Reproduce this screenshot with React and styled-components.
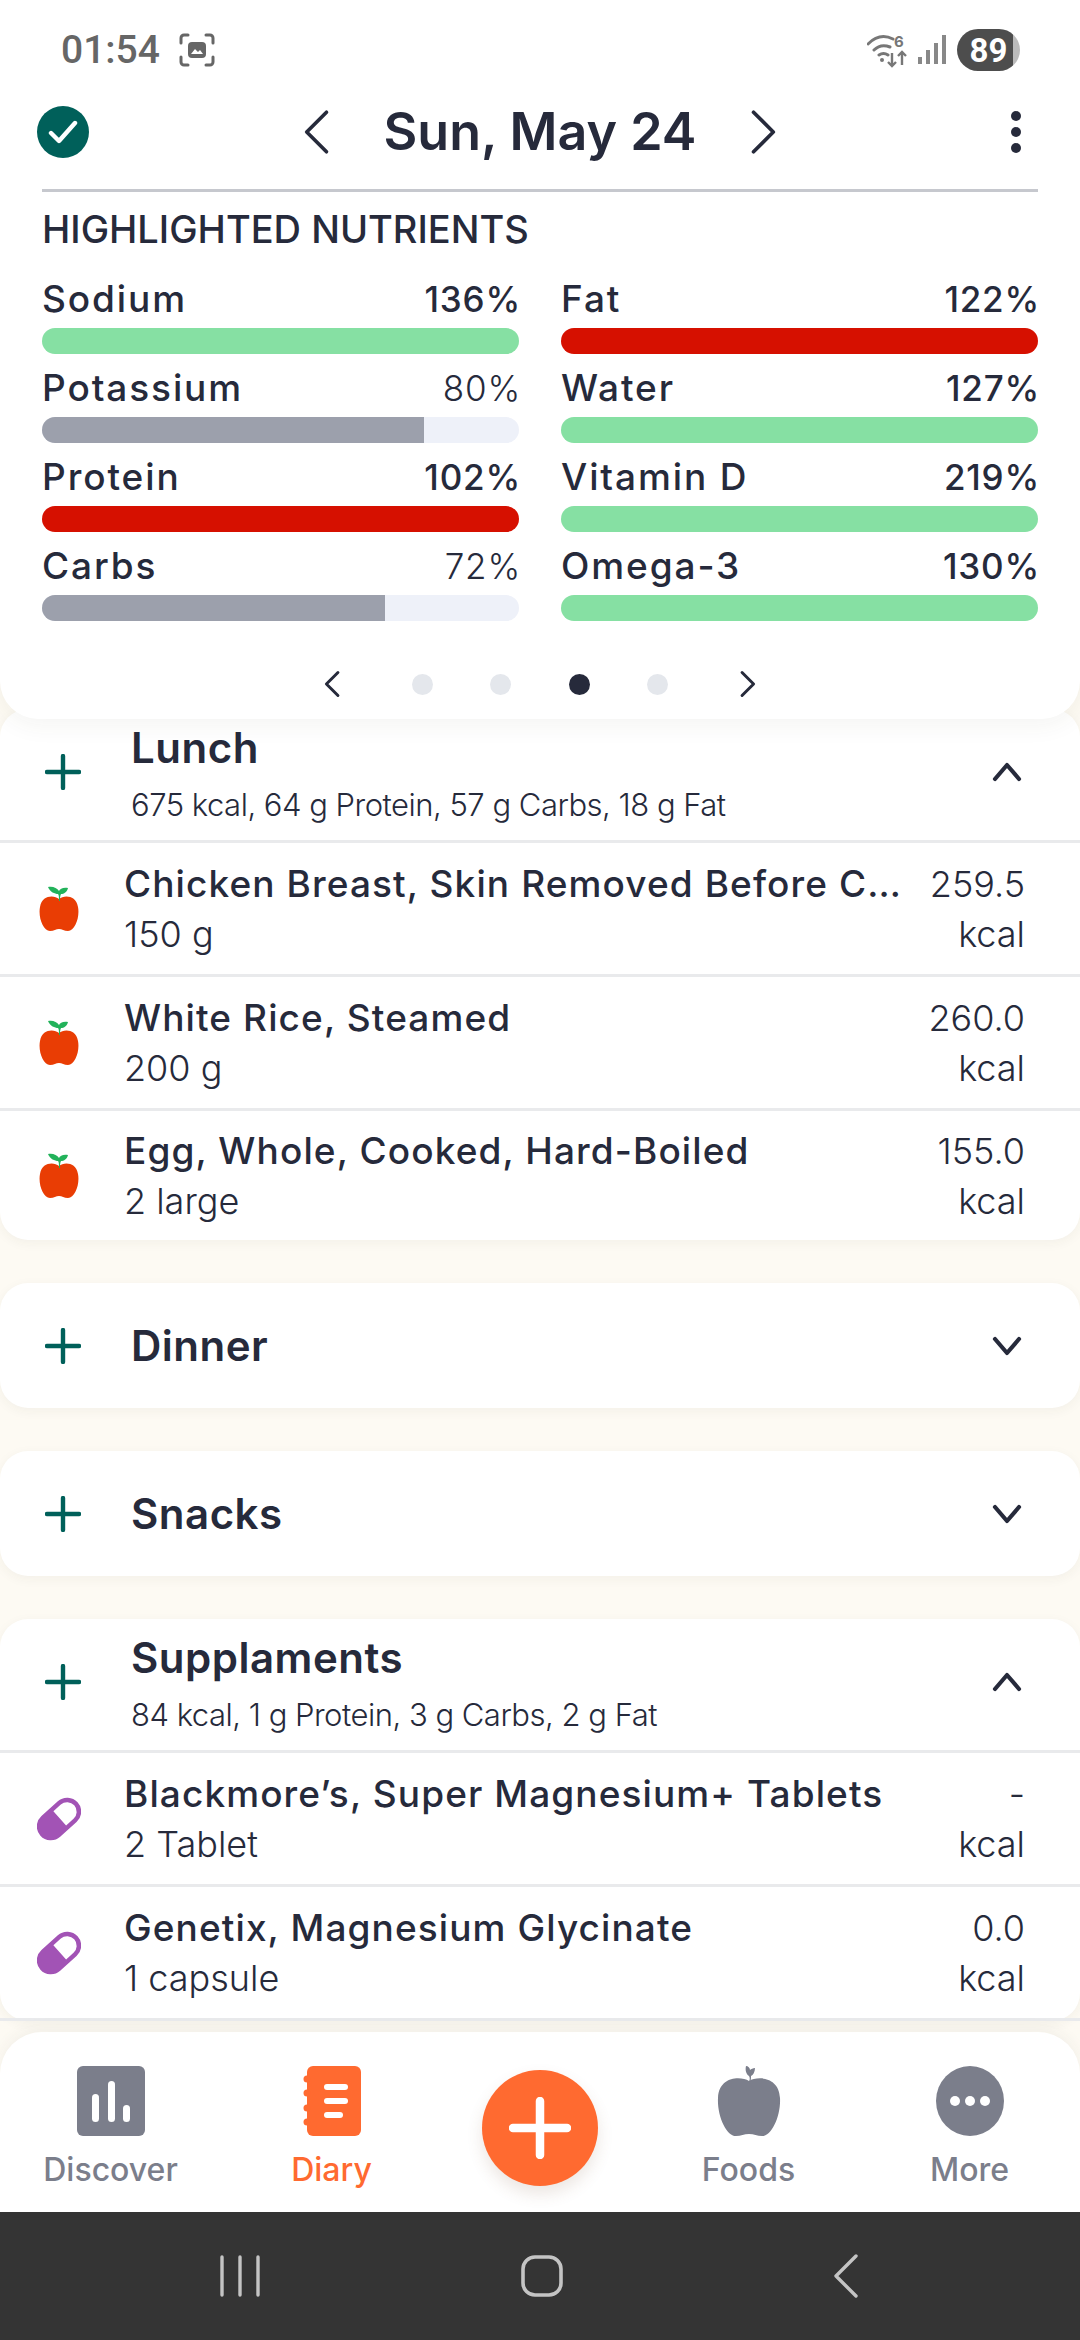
import React from 'react';
import styled, { createGlobalStyle } from 'styled-components';

const INK = '#262a3b';
const TEAL = '#00605a';
const ORANGE = '#ff6a30';
const GRAY = '#7b7e8b';
const CREAM = '#fdfaf3';

const GlobalStyle = createGlobalStyle`
  * { box-sizing: border-box; }
  html, body { margin: 0; padding: 0; background: ${CREAM}; }
  body { font-family: Inter, "Noto Sans", sans-serif; color: ${INK}; }
`;

const NUTRIENTS = [
  [
    { name: 'Sodium', pct: 136, color: '#86e0a3', bold: true },
    { name: 'Potassium', pct: 80, color: '#9ca0ac' },
    { name: 'Protein', pct: 102, color: '#d61000', bold: true },
    { name: 'Carbs', pct: 72, color: '#9ca0ac' },
  ],
  [
    { name: 'Fat', pct: 122, color: '#d61000', bold: true },
    { name: 'Water', pct: 127, color: '#86e0a3', bold: true },
    { name: 'Vitamin D', pct: 219, color: '#86e0a3', bold: true },
    { name: 'Omega-3', pct: 130, color: '#86e0a3', bold: true },
  ],
];

const LUNCH = [
  { name: 'Chicken Breast, Skin Removed Before C…', amount: '150 g', kcal: '259.5' },
  { name: 'White Rice, Steamed', amount: '200 g', kcal: '260.0' },
  { name: 'Egg, Whole, Cooked, Hard-Boiled', amount: '2 large', kcal: '155.0' },
];

const SUPPLEMENTS = [
  { name: 'Blackmore’s, Super Magnesium+ Tablets', amount: '2 Tablet', kcal: '-' },
  { name: 'Genetix, Magnesium Glycinate', amount: '1 capsule', kcal: '0.0' },
];

const Chevron = ({ dir = 'right', size = 34, width = 3.4, color = INK }) => {
  const points = {
    left: '23,3 9,17 23,31',
    right: '11,3 25,17 11,31',
    up: '5,24 17,10 29,24',
    down: '5,10 17,24 29,10',
  }[dir];
  return (
    <svg width={size} height={size} viewBox="0 0 34 34" fill="none">
      <polyline points={points} stroke={color} strokeWidth={width} strokeLinecap="round" strokeLinejoin="round" />
    </svg>
  );
};

const PlusIcon = () => (
  <svg width="36" height="36" viewBox="0 0 36 36">
    <path d="M18 2v32M2 18h32" stroke={TEAL} strokeWidth="4.4" strokeLinecap="round" />
  </svg>
);

const AppleIcon = () => (
  <svg width="40" height="46" viewBox="0 0 40 46">
    <path d="M20 13C15 9 3 9 1 21c-2 10 3 24 10 24 4 0 6-2 9-2s5 2 9 2c7 0 12-14 10-24C37 9 25 9 20 13z" fill="#e93d04" />
    <path d="M20 15c0-3 0-6-1-7C16 8 11 6 9 1c5-1 9 1 11 4 1-2 4-4 9-3-1 4-4 6-7 6-1 2-1 4-1 7z" fill="#22b25a" />
  </svg>
);

const PillIcon = () => (
  <svg width="44" height="44" viewBox="0 0 44 44">
    <g transform="rotate(-42 22 22)">
      <rect x="-3" y="8" width="50" height="28" rx="14" fill="#a253b5" />
      <path d="M23 12.5h10a9.5 9.5 0 0 1 0 19H23z" fill="#fff" />
    </g>
  </svg>
);

const DiscoverIcon = () => (
  <svg width="68" height="70" viewBox="0 0 68 70">
    <rect width="68" height="70" rx="6" fill={GRAY} />
    <rect x="15" y="28" width="7" height="28" rx="3.5" fill="#fff" />
    <rect x="31" y="15" width="7" height="41" rx="3.5" fill="#fff" />
    <rect x="46" y="39" width="7" height="17" rx="3.5" fill="#fff" />
  </svg>
);

const DiaryIcon = () => (
  <svg width="58" height="70" viewBox="0 0 58 70">
    <rect x="4" width="54" height="70" rx="6" fill={ORANGE} />
    <circle cx="4" cy="13" r="3.5" fill={ORANGE} />
    <circle cx="4" cy="27" r="3.5" fill={ORANGE} />
    <circle cx="4" cy="42" r="3.5" fill={ORANGE} />
    <circle cx="4" cy="56" r="3.5" fill={ORANGE} />
    <rect x="21" y="18" width="24" height="6" rx="3" fill="#fff" />
    <rect x="21" y="32" width="24" height="6" rx="3" fill="#fff" />
    <rect x="21" y="46" width="19" height="6" rx="3" fill="#fff" />
  </svg>
);

const FoodsIcon = () => (
  <svg width="64" height="70" viewBox="0 0 64 70">
    <path d="M32 15C24 10 2 10 1 32c-1 17 8 38 18 38 5 0 8-2 13-2s8 2 13 2c10 0 19-21 18-38C62 10 40 10 32 15z" fill={GRAY} />
    <path d="M32 16c1-3 1-4 0-6-3-2-4-6-3-10 2 0 4 2 4 4 1-1 3-2 5-2 0 4-2 7-4 8 0 2 0 4-1 6z" fill={GRAY} />
  </svg>
);

const MoreIcon = () => (
  <svg width="68" height="70" viewBox="0 0 68 70">
    <ellipse cx="34" cy="35" rx="34" ry="35" fill={GRAY} />
    <circle cx="19" cy="35" r="5" fill="#fff" />
    <circle cx="34" cy="35" r="5" fill="#fff" />
    <circle cx="49" cy="35" r="5" fill="#fff" />
  </svg>
);

const ScreenshotIcon = () => (
  <svg width="36" height="36" viewBox="0 0 36 36" fill="none">
    <path d="M9 3H5a3 3 0 0 0-3 3v5M27 3h4a3 3 0 0 1 3 3v5M9 33H5a3 3 0 0 1-3-3v-5M27 33h4a3 3 0 0 0 3-3v-5" stroke="#666" strokeWidth="3" strokeLinecap="round" />
    <rect x="9" y="10" width="18" height="16" rx="4" fill="#666" />
    <path d="M12 22l4-5 3 3 2-2 3 4z" fill="#fff" />
  </svg>
);

const WifiIcon = () => (
  <svg width="40" height="36" viewBox="0 0 40 36" fill="none">
    <path d="M1 12c8-8 17-9 25-5M7 18c5-5 11-5 16-3M12 23c3-2 6-2 9 0" stroke="#777" strokeWidth="3" strokeLinecap="round" />
    <circle cx="15" cy="28" r="2" fill="#777" />
    <text x="27" y="15" fontSize="15" fontWeight="700" fill="#777" fontFamily="Inter">6</text>
    <path d="M25 21v13M21 30l4 4 4-4M35 33V20M31 24l4-4 4 4" stroke="#777" strokeWidth="2.4" />
  </svg>
);

const SignalIcon = () => (
  <svg width="28" height="30" viewBox="0 0 28 30">
    <rect x="0" y="22" width="4" height="7" fill="#888" />
    <rect x="8" y="15" width="4" height="14" fill="#888" />
    <rect x="16" y="8" width="4" height="21" fill="#888" />
    <rect x="24" y="0" width="4" height="29" fill="#888" />
  </svg>
);

const App = () => {
  return (
    <>
      <GlobalStyle />
      <Screen>
        <TopCard>
          <StatusBar>
            <StatusGroup $gap={19}>
              <Clock>01:54</Clock>
              <ScreenshotIcon />
            </StatusGroup>
            <StatusGroup $gap={11}>
              <WifiIcon />
              <SignalIcon />
              <Battery>89</Battery>
            </StatusGroup>
          </StatusBar>
          <DateBar>
            <DoneBadge>
              <svg width="30" height="26" viewBox="0 0 30 26" fill="none">
                <polyline points="3,14 11,22 27,4" stroke="#fff" strokeWidth="4.4" strokeLinecap="round" strokeLinejoin="round" />
              </svg>
            </DoneBadge>
            <DateNav>
              <Chevron dir="left" size={48} width={2.6} />
              <DateTitle>Sun, May 24</DateTitle>
              <Chevron dir="right" size={48} width={2.6} />
            </DateNav>
            <Kebab>
              <i />
              <i />
              <i />
            </Kebab>
          </DateBar>
          <Rule />
          <SectionTitle>HIGHLIGHTED NUTRIENTS</SectionTitle>
          <NutrientGrid>
            {NUTRIENTS.map((column, i) => (
              <NutrientColumn key={i}>
                {column.map((n) => (
                  <Nutrient key={n.name}>
                    <NutrientLabel>
                      <NutrientName>{n.name}</NutrientName>
                      <Percent $bold={n.bold}>{n.pct}%</Percent>
                    </NutrientLabel>
                    <Track>
                      <Fill $color={n.color} style={{ width: `${Math.min(n.pct, 100)}%` }} />
                    </Track>
                  </Nutrient>
                ))}
              </NutrientColumn>
            ))}
          </NutrientGrid>
          <Pager>
            <Chevron dir="left" size={28} width={3.6} />
            <Dots>
              <Dot />
              <Dot />
              <Dot $active />
              <Dot />
            </Dots>
            <Chevron dir="right" size={28} width={3.6} />
          </Pager>
        </TopCard>

        <Scroller>
          <Meal $clipped>
            <MealHeader>
              <PlusIcon />
              <MealText $open>
                <MealName>Lunch</MealName>
                <MealSummary>675 kcal, 64 g Protein, 57 g Carbs, 18 g Fat</MealSummary>
              </MealText>
              <Chevron dir="up" width={4.2} />
            </MealHeader>
            {LUNCH.map((item, i) => (
              <FoodRow key={item.name} $last={i === LUNCH.length - 1}>
                <FoodIcon><AppleIcon /></FoodIcon>
                <FoodText>
                  <FoodName>{item.name}</FoodName>
                  <FoodAmount>{item.amount}</FoodAmount>
                </FoodText>
                <FoodKcal>
                  <span>{item.kcal}</span>
                  <span>kcal</span>
                </FoodKcal>
              </FoodRow>
            ))}
          </Meal>

          <Meal>
            <MealHeader $closed>
              <PlusIcon />
              <MealText><MealName>Dinner</MealName></MealText>
              <Chevron dir="down" width={4.2} />
            </MealHeader>
          </Meal>

          <Meal>
            <MealHeader $closed>
              <PlusIcon />
              <MealText><MealName>Snacks</MealName></MealText>
              <Chevron dir="down" width={4.2} />
            </MealHeader>
          </Meal>

          <Meal>
            <MealHeader>
              <PlusIcon />
              <MealText $open>
                <MealName>Supplaments</MealName>
                <MealSummary>84 kcal, 1 g Protein, 3 g Carbs, 2 g Fat</MealSummary>
              </MealText>
              <Chevron dir="up" width={4.2} />
            </MealHeader>
            {SUPPLEMENTS.map((item) => (
              <FoodRow key={item.name}>
                <FoodIcon><PillIcon /></FoodIcon>
                <FoodText>
                  <FoodName>{item.name}</FoodName>
                  <FoodAmount>{item.amount}</FoodAmount>
                </FoodText>
                <FoodKcal>
                  <span>{item.kcal}</span>
                  <span>kcal</span>
                </FoodKcal>
              </FoodRow>
            ))}
          </Meal>
        </Scroller>

        <TabBar>
          <Tab><DiscoverIcon /><TabLabel>Discover</TabLabel></Tab>
          <Tab><DiaryIcon /><TabLabel $active>Diary</TabLabel></Tab>
          <AddSlot>
            <AddButton>
              <svg width="62" height="62" viewBox="0 0 62 62">
                <path d="M31 4v54M4 31h54" stroke="#fff" strokeWidth="8.5" strokeLinecap="round" />
              </svg>
            </AddButton>
          </AddSlot>
          <Tab><FoodsIcon /><TabLabel>Foods</TabLabel></Tab>
          <Tab><MoreIcon /><TabLabel>More</TabLabel></Tab>
        </TabBar>

        <SystemBar>
          <svg width="42" height="42" viewBox="0 0 42 42">
            <path d="M3 2v38M21 2v38M39 2v38" stroke="#c4c4c4" strokeWidth="3.4" strokeLinecap="round" />
          </svg>
          <svg width="42" height="42" viewBox="0 0 42 42" fill="none">
            <rect x="2" y="2" width="38" height="38" rx="12" stroke="#c4c4c4" strokeWidth="3.6" />
          </svg>
          <svg width="36" height="44" viewBox="0 0 36 44" fill="none">
            <polyline points="33,2 13,22 33,42" stroke="#c4c4c4" strokeWidth="3.4" strokeLinecap="round" strokeLinejoin="round" />
          </svg>
        </SystemBar>
      </Screen>
    </>
  );
};

const Screen = styled.div`
  width: 1080px;
  height: 2340px;
  display: flex;
  flex-direction: column;
  overflow: hidden;
  background: ${CREAM};
`;

const TopCard = styled.section`
  position: relative;
  z-index: 2;
  height: 719px;
  flex: none;
  background: #fff;
  border-radius: 0 0 38px 38px;
  padding: 0 42px;
  box-shadow: 0 6px 24px rgba(60, 60, 40, 0.06);
`;

const StatusBar = styled.div`
  height: 100px;
  margin: 0 18px 0 19px;
  display: flex;
  align-items: center;
  justify-content: space-between;
`;

const StatusGroup = styled.div`
  display: flex;
  align-items: center;
  gap: ${(p) => p.$gap}px;
`;

const Clock = styled.span`
  font-family: Roboto, sans-serif;
  font-size: 39px;
  font-weight: 500;
  color: #666;
`;

const Battery = styled.span`
  width: 63px;
  height: 42px;
  border-radius: 21px;
  background: linear-gradient(90deg, #4d4d4d 89%, #bbb 89%);
  color: #fff;
  font-family: Roboto, sans-serif;
  font-size: 33px;
  font-weight: 700;
  display: flex;
  align-items: center;
  justify-content: center;
`;

const DateBar = styled.div`
  height: 56px;
  display: grid;
  grid-template-columns: 1fr auto 1fr;
  align-items: center;
`;

const DoneBadge = styled.div`
  width: 52px;
  height: 52px;
  margin-left: -5px;
  border-radius: 50%;
  background: ${TEAL};
  display: flex;
  align-items: center;
  justify-content: center;
`;

const DateNav = styled.div`
  display: flex;
  align-items: center;
  gap: 42px;
`;

const DateTitle = styled.h1`
  margin: 0;
  font-size: 52px;
  font-weight: 600;
  color: ${INK};
`;

const Kebab = styled.div`
  width: 40px;
  margin-right: 2px;
  justify-self: end;
  display: flex;
  flex-direction: column;
  align-items: center;
  gap: 6px;

  i {
    width: 10px;
    height: 10px;
    border-radius: 50%;
    background: ${INK};
  }
`;

const Rule = styled.div`
  height: 3px;
  margin-top: 33px;
  background: #c6c8ce;
`;

const SectionTitle = styled.h2`
  margin: 15px 0 0;
  font-size: 38px;
  line-height: 44px;
  font-weight: 500;
  color: ${INK};
`;

const NutrientGrid = styled.div`
  margin-top: 30px;
  display: grid;
  grid-template-columns: 1fr 1fr;
  column-gap: 42px;
`;

const NutrientColumn = styled.div`
  display: flex;
  flex-direction: column;
  gap: 16px;
`;

const Nutrient = styled.div`
  display: flex;
  flex-direction: column;
  gap: 11px;
`;

const NutrientLabel = styled.div`
  display: flex;
  justify-content: space-between;
  height: 36px;
  line-height: 36px;
  font-size: 37px;
  font-weight: 500;
`;

const NutrientName = styled.span`
  letter-spacing: 1.9px;
`;

const Percent = styled.span`
  margin-right: -2px;
  font-size: 35px;
  letter-spacing: 0.8px;
  font-weight: ${(p) => (p.$bold ? 500 : 300)};
`;

const Track = styled.div`
  height: 26px;
  border-radius: 13px;
  background: #eef1f9;
  overflow: hidden;
`;

const Fill = styled.div`
  height: 100%;
  background: ${(p) => p.$color};
`;

const Pager = styled.div`
  margin-top: 49px;
  display: flex;
  align-items: center;
  justify-content: center;
  gap: 65px;
`;

const Dots = styled.div`
  display: flex;
  gap: 57.5px;
`;

const Dot = styled.span`
  width: 21px;
  height: 21px;
  border-radius: 50%;
  background: ${(p) => (p.$active ? INK : '#e4e7ec')};
`;

const Scroller = styled.main`
  flex: 1;
  min-height: 0;
  display: flex;
  flex-direction: column;
  gap: 43px;
`;

const Meal = styled.section`
  flex: none;
  margin-top: ${(p) => (p.$clipped ? -10 : 0)}px;
  background: #fff;
  border-radius: 28px;
  box-shadow: 0 3px 12px rgba(60, 60, 40, 0.05);
`;

const MealHeader = styled.header`
  height: ${(p) => (p.$closed ? 125 : 134)}px;
  padding: 0 56px ${(p) => (p.$closed ? 0 : 5)}px 45px;
  display: flex;
  align-items: center;
  gap: 50px;
  border-bottom: ${(p) => (p.$closed ? 'none' : '3px solid #e9eaec')};
`;

const MealText = styled.div`
  flex: 1;
  min-width: 0;
  margin-top: ${(p) => (p.$open ? 4 : 0)}px;
`;

const MealName = styled.h3`
  margin: 0;
  font-size: 42px;
  line-height: 50px;
  font-weight: 600;
  letter-spacing: 0.5px;
  color: ${INK};
`;

const MealSummary = styled.p`
  margin: 12px 0 0;
  font-size: 31px;
  line-height: 40px;
  font-weight: 300;
  letter-spacing: -0.5px;
  color: ${INK};
`;

const FoodRow = styled.div`
  height: ${(p) => (p.$last ? 129 : 134)}px;
  padding: 0 55px 0 37px;
  display: flex;
  align-items: center;
  border-bottom: ${(p) => (p.$last ? 'none' : '3px solid #e9eaec')};
`;

const FoodIcon = styled.div`
  width: 44px;
  margin-right: 43px;
  flex: none;
  display: flex;
  justify-content: center;
`;

const FoodText = styled.div`
  flex: 1;
  min-width: 0;
`;

const FoodName = styled.div`
  font-size: 37px;
  line-height: 50px;
  font-weight: 500;
  letter-spacing: 1.1px;
  white-space: nowrap;
`;

const FoodAmount = styled.div`
  font-size: 36px;
  line-height: 50px;
  font-weight: 300;
`;

const FoodKcal = styled.div`
  flex: none;
  width: 120px;
  display: flex;
  flex-direction: column;
  align-items: flex-end;
  font-size: 36px;
  line-height: 50px;
  font-weight: 300;
`;

const TabBar = styled.nav`
  position: relative;
  z-index: 3;
  flex: none;
  height: 180px;
  background: #fff;
  border-radius: 42px 42px 0 0;
  box-shadow: 0 -4px 14px rgba(60, 60, 60, 0.05);
  display: grid;
  grid-template-columns: 221px 221px 196px 221px 221px;
  padding-top: 34px;
`;

const Tab = styled.div`
  display: flex;
  flex-direction: column;
  align-items: center;
`;

const TabLabel = styled.span`
  margin-top: 12px;
  font-size: 32px;
  line-height: 44px;
  font-weight: 500;
  color: ${(p) => (p.$active ? ORANGE : GRAY)};
`;

const AddSlot = styled.div`
  display: flex;
  justify-content: center;
`;

const AddButton = styled.button`
  width: 116px;
  height: 116px;
  margin-top: 4px;
  border: 0;
  padding: 0;
  border-radius: 50%;
  background: ${ORANGE};
  box-shadow: 0 8px 16px rgba(120, 80, 50, 0.14);
  display: flex;
  align-items: center;
  justify-content: center;
`;

const SystemBar = styled.div`
  flex: none;
  height: 128px;
  background: #343434;
  padding: 0 221px 0 219px;
  display: flex;
  align-items: center;
  justify-content: space-between;
`;

export default App;
